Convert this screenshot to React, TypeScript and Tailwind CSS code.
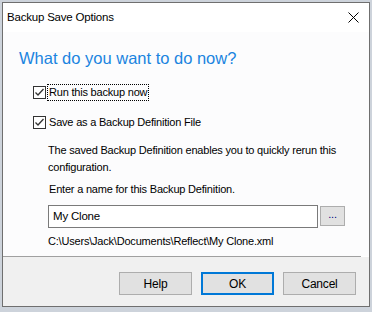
import React from 'react';

const Check = () => (
  <span className="w-[13px] h-[13px] border border-[#333333] bg-white flex items-center justify-center shrink-0">
    <svg width="11" height="11" viewBox="0 0 11 11">
      <path d="M1.5 5.5 L4 8 L9.5 2" fill="none" stroke="#333333" strokeWidth="1.3" />
    </svg>
  </span>
);

const Button = ({ label, primary }: { label: string; primary?: boolean }) => (
  <button
    className={`w-[73px] h-[23px] bg-[#e1e1e1] text-[12px] text-black ${
      primary ? 'border-2 border-[#0078d7]' : 'border border-[#adadad]'
    }`}
  >
    {label}
  </button>
);

export default function App() {
  return (
    <div
      className="w-[372px] h-[312px] bg-[#cdd3db] pt-[2px] pl-[2px] overflow-hidden tracking-[-0.2px]"
      style={{ fontFamily: '"Liberation Sans", Arial, sans-serif' }}
    >
      <div className="w-[368px] h-[305px] border border-[#6f6f6f] bg-white flex flex-col">
        {/* title bar */}
        <div className="h-[29px] flex items-center justify-between pl-[4px] pr-[10px]">
          <span className="text-[11.5px] text-black">Backup Save Options</span>
          <svg width="11" height="11" viewBox="0 0 11 11">
            <path d="M0.5 0.5 L10.5 10.5 M10.5 0.5 L0.5 10.5" stroke="#000" strokeWidth="1" />
          </svg>
        </div>

        {/* body */}
        <div className="flex-1 bg-[#fcfcfd] pl-[16px] pr-[10px] text-[11px]">
          <h1 className="text-[16.5px] tracking-[0px] text-[#1a84e0] mt-[15px] leading-[22px]">
            What do you want to do now?
          </h1>

          <label className="flex items-center gap-[2px] mt-[16px] ml-[14px]">
            <Check />
            <span className="text-black leading-[15px] outline outline-1 outline-dotted outline-black px-[1px]">
              Run this backup now
            </span>
          </label>

          <label className="flex items-center gap-[2px] mt-[15px] ml-[14px]">
            <Check />
            <span className="text-black leading-[15px] px-[1px]">Save as a Backup Definition File</span>
          </label>

          <div className="ml-[29px] mt-[12px] text-black leading-[17px]">
            <p>
              The saved Backup Definition enables you to quickly rerun this
              <br />
              configuration.
            </p>
            <p className="mt-[5px] ml-[1px]">Enter a name for this Backup Definition.</p>
            <div className="flex items-start gap-[2px] mt-[7px]">
              <div className="w-[270px] h-[23px] border border-[#7a7a7a] bg-white flex items-center px-[4px] text-[11.5px]">
                My Clone
              </div>
              <div className="w-[25px] h-[20px] mt-[1px] border border-[#adadad] bg-[#e1e1e1] flex items-center justify-center text-[#000080] leading-none pb-[3px]">
                ...
              </div>
            </div>
            <p className="mt-[5px]">C:\Users\Jack\Documents\Reflect\My Clone.xml</p>
          </div>
        </div>

        {/* footer */}
        <div className="h-[1px] bg-[#a0a0a0] mr-[8px]" />
        <div className="h-[49px] bg-[#f0f0f0] flex items-start justify-end gap-[9px] pr-[13px] pt-[15px]">
          <Button label="Help" />
          <Button label="OK" primary />
          <Button label="Cancel" />
        </div>
      </div>
    </div>
  );
}
